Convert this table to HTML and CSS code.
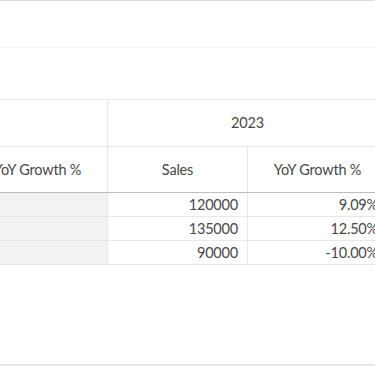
FILE: index.html
```html
<!DOCTYPE html>
<html>
<head>
<meta charset="utf-8">
<link rel="stylesheet" href="styles.css">
</head>
<body>
<div class="page">
  <div class="toolbar"></div>
  <div class="spacer"></div>
  <div class="grid-wrap">
    <table class="pivot">
      <colgroup><col class="c"><col class="c"><col class="c"></colgroup>
      <thead>
        <tr class="h1">
          <th></th>
          <th colspan="2">2023</th>
        </tr>
        <tr class="h2">
          <th>YoY Growth %</th>
          <th>Sales</th>
          <th>YoY Growth %</th>
        </tr>
      </thead>
      <tbody>
        <tr><td class="empty"></td><td>120000</td><td>9.09%</td></tr>
        <tr><td class="empty"></td><td>135000</td><td>12.50%</td></tr>
        <tr><td class="empty"></td><td>90000</td><td>-10.00%</td></tr>
      </tbody>
    </table>
  </div>
  <div class="fill"></div>
  <div class="footer"></div>
</div>
</body>
</html>
```
FILE: styles.css
```css
html, body {
  margin: 0;
  padding: 0;
  background: #fff;
}
.page {
  width: 375px;
  height: 366px;
  overflow: hidden;
  display: flex;
  flex-direction: column;
  font-family: Lato, "Noto Sans", sans-serif;
  color: #484848;
}
.toolbar {
  height: 46px;
  border-top: 1px solid #dcdcdc;
  border-bottom: 1px solid #f3f3f3;
  flex: none;
}
.spacer {
  height: 51px;
  flex: none;
}
.grid-wrap {
  overflow: hidden;
  flex: none;
}
.pivot {
  margin-left: -33px;
  border-collapse: collapse;
  table-layout: fixed;
  width: 420px;
  font-size: 14.5px;
  letter-spacing: -0.2px;
}
.pivot col.c {
  width: 140px;
}
.pivot th {
  font-weight: normal;
  text-align: center;
  border: 1px solid #e6e6e6;
  padding: 0 8px;
  padding-bottom: 1px;
}
.pivot .h1 th {
  height: 45px;
  border-top: 1px solid #ececec;
}
.pivot .h2 th {
  height: 44px;
  border-bottom: 1px solid #bdbdbd;
}
.pivot td {
  height: 22px;
  padding: 0 9px 1px;
  text-align: right;
  border: 1px solid #e8e8e8;
  white-space: nowrap;
}
.pivot td.empty {
  background: #f2f2f2;
}
.fill {
  flex: 1;
}
.footer {
  height: 2px;
  background: #e6e6e6;
  flex: none;
}
```
